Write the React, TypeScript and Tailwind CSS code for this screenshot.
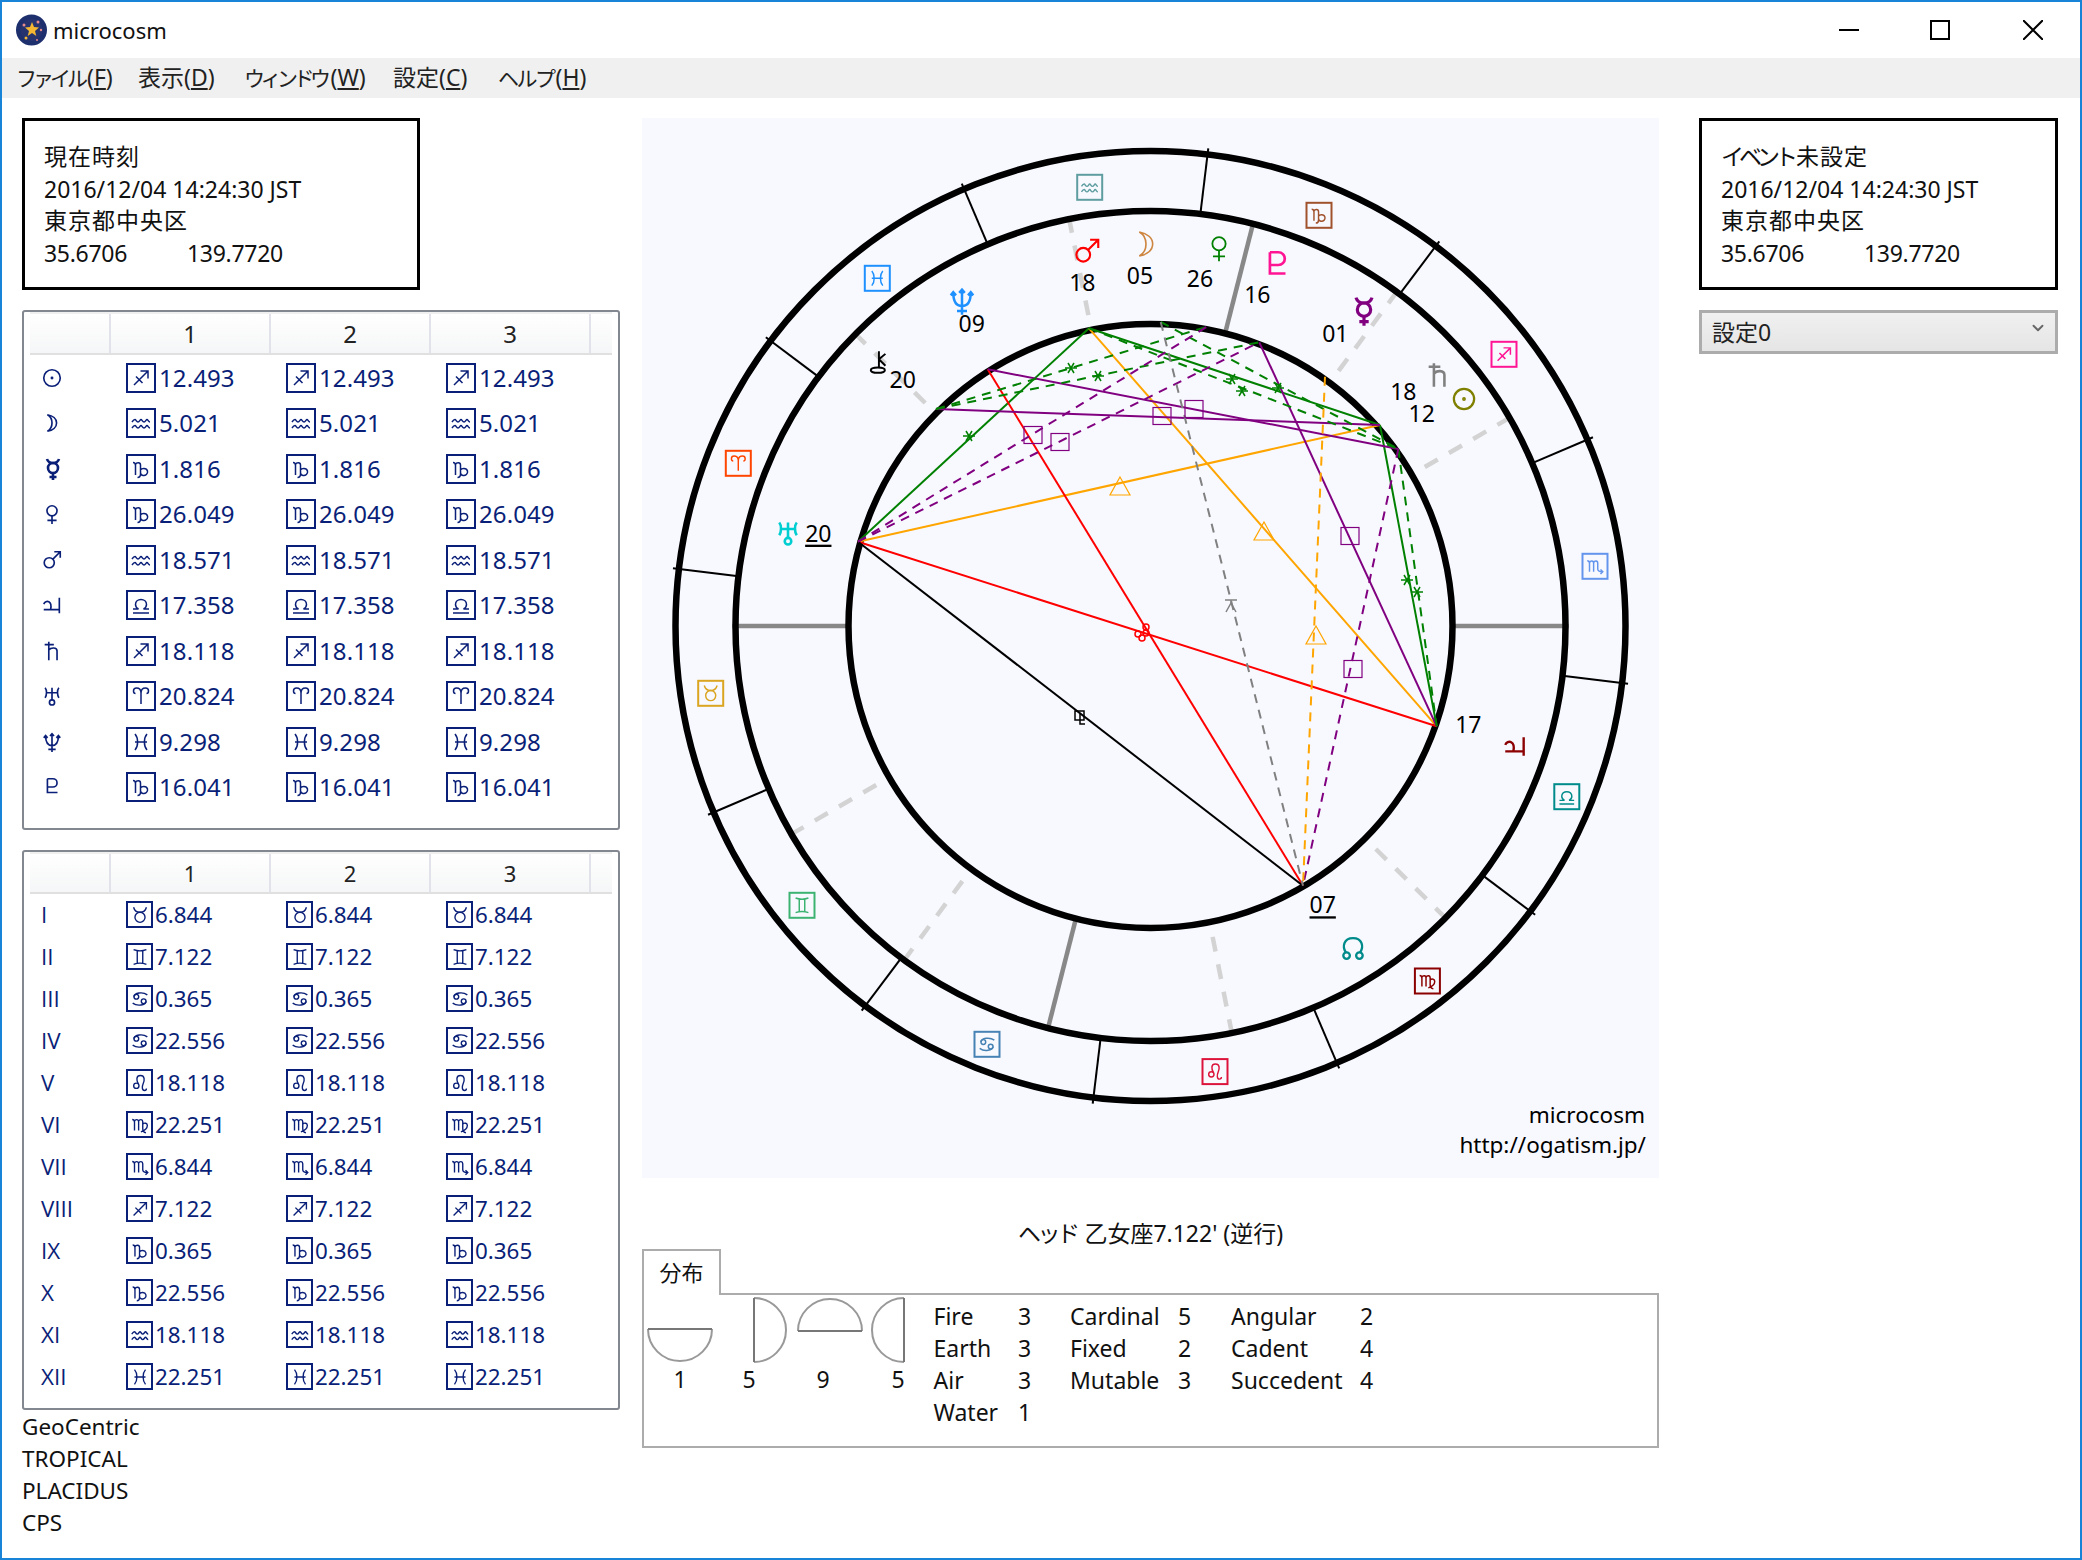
import { ChevronDown } from "lucide-react";
import type { ReactNode } from "react";

const CX = 1150.5;
const CY = 626;

// clockwise from 12 o'clock
const polar = (r: number, deg: number): [number, number] => [
  CX + r * Math.sin((deg * Math.PI) / 180),
  CY - r * Math.cos((deg * Math.PI) / 180),
];

type P = [number, number];
type Asp = [P, P, string, boolean];

const A: P = [858, 541.7];
const J: P = [1436.7, 726.3];
const N: P = [1303, 885.7];
const M: P = [1089, 328.3];
const Ne: P = [987.7, 369.3];
const Ch: P = [936, 409];
const S: P = [1380, 425];
const Sa: P = [1398.3, 449];
const Pl: P = [1259.3, 342.3];
const Mo: P = [1160.7, 322];
const Ve: P = [1207, 326.7];
const Me: P = [1325, 376.7];

const aspects: Asp[] = [
  [A, M, "#008000", false],
  [M, S, "#008000", false],
  [S, J, "#008000", false],
  [A, S, "#ffa500", false],
  [M, J, "#ffa500", false],
  [A, J, "#ff0000", false],
  [Ne, N, "#ff0000", false],
  [Ne, Sa, "#800080", false],
  [Ch, S, "#800080", false],
  [Pl, J, "#800080", false],
  [A, N, "#000000", false],
  [Ch, Pl, "#008000", true],
  [Ch, Ve, "#008000", true],
  [M, Sa, "#008000", true],
  [Mo, Sa, "#008000", true],
  [Sa, J, "#008000", true],
  [A, Ve, "#800080", true],
  [A, Pl, "#800080", true],
  [Sa, N, "#800080", true],
  [Me, N, "#ffa500", true],
  [Mo, N, "#808080", true],
];

const waves = (y: number) =>
  `M3 ${y}c1-1.500 2-2.500 3-2.500s1.500 2.500 3 2.500 2-2.500 3-2.500 1.500 2.500 3 2.500 2-2.500 3-2.500 1.500 2.500 3 2.500`;

// astrological symbols, 24x24 stroked
const GLYPHS: Record<string, ReactNode> = {
  ari: <path d="M12 20V9C12 5 9.500 4 7.500 4 5.500 4 4.500 5.500 4.500 7c0 1.500 1 2.500 2 2.500M12 9c0-4 2.500-5 4.500-5 2 0 3 1.500 3 3 0 1.500-1 2.500-2 2.500" />,
  tau: (
    <>
      <circle cx="12" cy="14.500" r="5.500" />
      <path d="M5 3.500c1 4 4 5.500 7 5.500s6-1.500 7-5.500" />
    </>
  ),
  gem: <path d="M5 4c4 1.500 10 1.500 14 0M5 20c4-1.500 10-1.500 14 0M9 5.200v13.600M15 5.200v13.600" />,
  can: (
    <>
      <circle cx="8" cy="9.500" r="2.600" />
      <circle cx="16" cy="14.500" r="2.600" />
      <path d="M5.400 9.500C6 5.500 14.500 3.500 20 7.500M18.600 14.500C18 18.500 9.500 20.500 4 16.500" />
    </>
  ),
  leo: (
    <>
      <circle cx="8" cy="15" r="2.900" />
      <path d="M10.200 13C8 9 7.500 3.800 12.500 3.800S17 9 15.500 12.500C14 16 14 20.200 17 20.200c1.500 0 2-1.200 2-2.200" />
    </>
  ),
  vir: <path d="M3.500 6c2 0 2.500 1.500 2.500 3v9M6 8c1-2.500 4.500-2.500 4.500.5V18M10.500 8c1-2.500 4.500-2.500 4.500.5V16c0 2 1 4 3.500 4.500M15 11c2-2 5-1 5 1.500 0 3-3 5.500-7 7" />,
  lib: <path d="M4 20h16M4 16h5.500c-2-1-3-2.500-3-4.500 0-3 2.500-5 5.500-5s5.500 2 5.500 5c0 2-1 3.500-3 4.500H20" />,
  sco: <path d="M3.500 6c2 0 2.500 1.500 2.500 3v9M6 8c1-2.500 4.500-2.500 4.500.5V18M10.500 8c1-2.500 4.500-2.500 4.500.5V15c0 2 1 3 5 3M18 15.500l2.500 2.500-2.500 2.500" />,
  sag: <path d="M5 19L19 5M11.500 5H19v7.500M7 10.500l6.500 6.500" />,
  cap: <path d="M4 5.500c2 0 2.500 1.500 2.500 3v9.500M6.500 7.500c1-2.500 5-2.500 5 .5v9c0 2-.8 3.500-3 3.500M11.500 13c1-2 6-2.500 7 1 .6 3-2 5-4.500 4.500-1.500-.3-2.500-1.500-2.500-3" />,
  aqu: <path d={`${waves(11)}${waves(17)}`} />,
  pis: <path d="M6 4c3.500 4 3.500 12 0 16M18 4c-3.500 4-3.500 12 0 16M6 12h12" />,
  sun: (
    <>
      <circle cx="12" cy="12" r="9" />
      <circle cx="12" cy="12" r=".7" />
    </>
  ),
  moo: <path d="M7 3c6 1 10 4.500 10 9s-4 8-10 9c3.500-2 5-5 5-9S10.500 5 7 3z" />,
  mer: (
    <>
      <circle cx="12" cy="11" r="5" />
      <path d="M6 2c1 3.500 3.500 4 6 4s5-.5 6-4M12 16v7M8.500 20h7" />
    </>
  ),
  ven: (
    <>
      <circle cx="12" cy="8.500" r="5.500" />
      <path d="M12 14v9M7 19h10" />
    </>
  ),
  mar: (
    <>
      <circle cx="9" cy="15" r="5.500" />
      <path d="M13 11L21 3M14.500 3H21v6.500" />
    </>
  ),
  jup: <path d="M3 17h17M20 4v17M3 11c1-2.500 3.500-3.500 5.500-2.500 2 1 3 3.500 2 8.500" />,
  sat: <path d="M4 5h10M8.500 2v20M8.500 11c2-3 9-3.500 9 1v10" />,
  ura: (
    <>
      <circle cx="12" cy="19" r="2.800" />
      <path d="M4.500 3c2 2.500 2 8 0 11M19.500 3c-2 2.500-2 8 0 11M5.500 8.500h13M12 3v13.200" />
    </>
  ),
  nep: <path d="M5 5c0 8 3 11 7 11s7-3 7-11M12 3v20M8 20h8M3 7.500L5 5l2.200 2.500M16.800 7.500L19 5l2 2.500M9.800 5.500L12 3l2.200 2.500" />,
  plu: <path d="M7 3v15h11M7 3h6a4.500 4.500 0 0 1 0 9H7" />,
  chi: (
    <>
      <ellipse cx="10" cy="19.500" rx="6.500" ry="2.500" />
      <path d="M11 2v15M11 9.500l6-5M11 9.500l6 6" />
    </>
  ),
  nod: (
    <>
      <circle cx="6.500" cy="18.500" r="2.800" />
      <circle cx="17.500" cy="18.500" r="2.800" />
      <path d="M6 15.800C2.500 11 4 3.500 12 3.500S21.500 11 18 15.800" />
    </>
  ),
};

const Glyph = ({
  name,
  size,
  sw = 1.8,
  color = "currentColor",
  x,
  y,
}: {
  name: string;
  size: number;
  sw?: number;
  color?: string;
  x?: number;
  y?: number;
}) => (
  <svg x={x} y={y} width={size} height={size} viewBox="0 0 24 24" fill="none" stroke={color} strokeWidth={sw}>
    {GLYPHS[name]}
  </svg>
);

const signs: [string, number, number, string][] = [
  ["aqu", 1089.7, 187.3, "#5f9ea0"],
  ["pis", 877.3, 278.3, "#1e90ff"],
  ["ari", 738.3, 463.3, "#ff4500"],
  ["tau", 710.7, 693.3, "#daa520"],
  ["gem", 802, 905.3, "#3cb371"],
  ["can", 987, 1044.3, "#4682b4"],
  ["leo", 1215, 1071.6, "#dc143c"],
  ["vir", 1427.4, 981, "#8b0000"],
  ["lib", 1566.8, 796.7, "#008b8b"],
  ["sco", 1595, 566.3, "#6495ed"],
  ["sag", 1504, 354.3, "#ff1493"],
  ["cap", 1319, 215.3, "#a0522d"],
];

const planets: [string, number, number, string, number, number][] = [
  ["sun", 1464, 399, "#808000", 27, 2],
  ["sat", 1438, 375, "#808080", 28, 2.200],
  ["mer", 1364, 311, "#800080", 32, 2.400],
  ["plu", 1277, 265, "#ff1493", 34, 1.900],
  ["ven", 1219, 248, "#008000", 29, 1.500],
  ["moo", 1146, 244, "#cd853f", 32, 1.200],
  ["mar", 1087, 251, "#ff0000", 30, 1.700],
  ["nep", 962, 301, "#1e90ff", 30, 2],
  ["chi", 880, 362, "#000000", 26, 1.800],
  ["ura", 788, 533, "#00ced1", 28, 2.200],
  ["jup", 1515, 746, "#8b0000", 26, 2.200],
  ["nod", 1353, 948, "#008b8b", 28, 2],
];

const degrees: [string, number, number, boolean][] = [
  ["12", 1421.7, 413.3, false],
  ["18", 1403.3, 390.7, false],
  ["01", 1335.3, 332.7, false],
  ["16", 1257.3, 294, false],
  ["26", 1200, 278.3, false],
  ["05", 1140, 275, false],
  ["18", 1082.3, 281.7, false],
  ["09", 971.7, 323.3, false],
  ["20", 902.7, 379.3, false],
  ["20", 818.3, 532.7, true],
  ["17", 1468.3, 723.7, false],
  ["07", 1322.7, 904.3, true],
];

const sextiles: P[] = [
  [969, 436],
  [1071, 368],
  [1098, 376],
  [1232, 379],
  [1242, 391],
  [1278, 388],
  [1407, 580],
  [1417, 592],
];
const squares: P[] = [
  [1033, 435],
  [1060, 442],
  [1162, 416],
  [1194, 409],
  [1350, 536],
  [1353, 669],
];
const trines: P[] = [
  [1120, 486],
  [1264, 531],
  [1316, 635],
];

const Chart = () => (
  <svg viewBox="642 118 1017 1060" width="1017" height="1060" className="block font-['Noto_Sans']">
    {Array.from({ length: 12 }, (_, k) => {
      const [x1, y1] = polar(415, -23.1 + 30 * k);
      const [x2, y2] = polar(481, -23.1 + 30 * k);
      return <line key={k} x1={x1} y1={y1} x2={x2} y2={y2} stroke="#000" strokeWidth="2" />;
    })}
    {[-45.3, -11.3, 36.4, 59.9, 134.7, 168.7, 216.4, 239.9].map((d) => {
      const [x1, y1] = polar(416, d);
      const [x2, y2] = polar(302, d);
      return (
        <line key={d} x1={x1} y1={y1} x2={x2} y2={y2} stroke="#d3d3d3" strokeWidth="4.5" strokeDasharray="15 13" />
      );
    })}
    {[14.3, 90, 194.3, 270].map((d) => {
      const [x1, y1] = polar(418, d);
      const [x2, y2] = polar(302, d);
      return <line key={d} x1={x1} y1={y1} x2={x2} y2={y2} stroke="#888" strokeWidth="4.5" />;
    })}
    {[475, 415, 302].map((r) => (
      <circle key={r} cx={CX} cy={CY} r={r} fill="none" stroke="#000" strokeWidth="6.5" />
    ))}

    {aspects.map(([a, b, c, dashed], i) => (
      <line
        key={i}
        x1={a[0]}
        y1={a[1]}
        x2={b[0]}
        y2={b[1]}
        stroke={c}
        strokeWidth="2"
        strokeDasharray={dashed ? "9 7" : undefined}
      />
    ))}

    {sextiles.map(([x, y], i) => (
      <g key={i} stroke="#008000" strokeWidth="1.5">
        <line x1={x - 6} y1={y} x2={x + 6} y2={y} />
        <line x1={x - 3} y1={y - 5} x2={x + 3} y2={y + 5} />
        <line x1={x + 3} y1={y - 5} x2={x - 3} y2={y + 5} />
      </g>
    ))}
    {squares.map(([x, y], i) => (
      <rect key={i} x={x - 9} y={y - 8.5} width="18" height="17" fill="none" stroke="#800080" strokeWidth="1.2" />
    ))}
    {trines.map(([x, y], i) => (
      <polygon
        key={i}
        points={`${x},${y - 9} ${x + 10},${y + 9} ${x - 10},${y + 9}`}
        fill="none"
        stroke="#ffa500"
        strokeWidth="1.2"
      />
    ))}
    <g fill="none" stroke="#ff0000" strokeWidth="1.5">
      <circle cx="1146" cy="627" r="3" />
      <circle cx="1142" cy="638" r="3" />
      <circle cx="1138" cy="634" r="3" />
      <circle cx="1146" cy="633" r="3" />
    </g>
    <g fill="none" stroke="#000" strokeWidth="1.5">
      <rect x="1075" y="711" width="9" height="9" />
      <path d="M1080 714v10h5" />
    </g>
    <path d="M1226 612l5-9 5 9M1231 603v-3M1225 600h12" fill="none" stroke="#808080" strokeWidth="1.5" />

    {signs.map(([g, x, y, c]) => (
      <g key={g}>
        <rect x={x - 12.5} y={y - 12.5} width="25" height="25" fill="none" stroke={c} strokeWidth="2" />
        <Glyph name={g} size={22} color={c} sw={1.600} x={x - 11} y={y - 11} />
      </g>
    ))}
    {planets.map(([g, x, y, c, s, w]) => (
      <Glyph key={g} name={g} size={s} color={c} sw={w} x={x - s / 2} y={y - s / 2} />
    ))}
    <g fontSize="23" fill="#000">
      {degrees.map(([t, x, y, u], i) => (
        <text
          key={i}
          x={x}
          y={y}
          textAnchor="middle"
          dominantBaseline="central"
          textDecoration={u ? "underline" : undefined}
        >
          {t}
        </text>
      ))}
      <text x="1645" y="1123" textAnchor="end" fontSize="22.5">
        microcosm
      </text>
      <text x="1646" y="1153" textAnchor="end" fontSize="22.5">
        http://ogatism.jp/
      </text>
    </g>
  </svg>
);

const planetRows: [string, string, string][] = [
  ["sun", "sag", "12.493"],
  ["moo", "aqu", "5.021"],
  ["mer", "cap", "1.816"],
  ["ven", "cap", "26.049"],
  ["mar", "aqu", "18.571"],
  ["jup", "lib", "17.358"],
  ["sat", "sag", "18.118"],
  ["ura", "ari", "20.824"],
  ["nep", "pis", "9.298"],
  ["plu", "cap", "16.041"],
];

const houseRows: [string, string, string][] = [
  ["I", "tau", "6.844"],
  ["II", "gem", "7.122"],
  ["III", "can", "0.365"],
  ["IV", "can", "22.556"],
  ["V", "leo", "18.118"],
  ["VI", "vir", "22.251"],
  ["VII", "sco", "6.844"],
  ["VIII", "sag", "7.122"],
  ["IX", "cap", "0.365"],
  ["X", "cap", "22.556"],
  ["XI", "aqu", "18.118"],
  ["XII", "pis", "22.251"],
];

const TableHead = ({ tall }: { tall: boolean }) => (
  <div
    className={`flex border-b-2 border-t-2 border-b-[#e0e0e0] border-t-[#f0f0f0] bg-gradient-to-b from-white to-[#f5f6f7] text-[#222] ${
      tall ? "h-[43px] text-[24px] leading-[39px]" : "h-[42px] text-[22px] leading-[38px]"
    }`}
  >
    <div className="w-[81px] border-r-2 border-[#e2e3ea]" />
    {["1", "2", "3"].map((h) => (
      <div key={h} className="w-[160px] border-r-2 border-[#e2e3ea] text-center">
        {h}
      </div>
    ))}
  </div>
);

const PlanetTable = () => (
  <div className="mt-[20px] h-[520px] rounded-[3px] border-2 border-[#828790] px-[6px]">
    <TableHead tall />
    {planetRows.map(([g, s, v]) => (
      <div key={g} className="flex h-[45.5px] items-center text-[24px] text-[#0a1f78]">
        <div className="w-[81px] pl-[11px]">
          <Glyph name={g} size={g === "mer" ? 24 : 22} sw={g === "mer" ? 2.600 : 1.800} />
        </div>
        {[0, 1, 2].map((i) => (
          <div key={i} className="flex w-[160px] items-center pl-[15px]">
            <span className="flex h-[30px] w-[30px] items-center justify-center border-2 border-[#0a1f78]">
              <Glyph name={s} size={24} sw={1.500} />
            </span>
            <span className="ml-[3px] tracking-[0.1px]">{v}</span>
          </div>
        ))}
      </div>
    ))}
  </div>
);

const HouseTable = () => (
  <div className="mt-[20px] h-[560px] rounded-[3px] border-2 border-[#828790] px-[6px]">
    <TableHead tall={false} />
    {houseRows.map(([h, s, v]) => (
      <div key={h} className="flex h-[42px] items-center text-[22.4px] text-[#0a1f78]">
        <div className="w-[81px] pl-[11px] font-['Open_Sans']">{h}</div>
        {[0, 1, 2].map((i) => (
          <div key={i} className="flex w-[160px] items-center pl-[15px]">
            <span className="flex h-[27px] w-[27px] items-center justify-center border-2 border-[#0a1f78]">
              <Glyph name={s} size={22} sw={1.500} />
            </span>
            <span className="ml-[2px]">{v}</span>
          </div>
        ))}
      </div>
    ))}
  </div>
);

const InfoBox = ({ title, className }: { title: ReactNode; className: string }) => (
  <div className={`h-[172px] border-[3px] border-black pt-[20px] text-[23px] leading-[32px] text-[#111] ${className}`}>
    <div className="-translate-y-[1px] tracking-[1px]">{title}</div>
    <div>2016/12/04 14:24:30 JST</div>
    <div className="-translate-y-[1px] tracking-[1px]">東京都中央区</div>
    <div className="flex tracking-[-0.3px]">
      <span className="w-[143px]">35.6706</span>
      <span>139.7720</span>
    </div>
  </div>
);

const Logo = () => (
  <svg width="31" height="32" viewBox="0 0 31 32">
    <circle cx="15.5" cy="16" r="15.5" fill="#1e2f6e" />
    <circle cx="15.5" cy="16" r="11" fill="#27336f" />
    <path d="M16 8l2 5 5 .5-4 3.500 1.300 5-4.300-3-4.300 3 1.300-5-4-3.500 5-.5z" fill="#f5b731" />
    <circle cx="8" cy="11" r="1.500" fill="#e88a8a" />
    <circle cx="22" cy="8" r="1.500" fill="#e88a8a" />
    <circle cx="25" cy="16" r="1.200" fill="#e88a8a" />
    <circle cx="10" cy="24" r="1.500" fill="#f5b731" />
    <circle cx="21" cy="26" r="1" fill="#e88a8a" />
  </svg>
);

const Menu = ({ kana, kanji, k, spacing }: { kana?: string; kanji?: string; k: string; spacing?: string }) => (
  <span className="-translate-y-[1px] inline-block text-[23px] text-[#222]">
    {kana && <span className={`text-[21px] ${spacing}`}>{kana}</span>}
    {kanji}(<span className="underline">{k}</span>)
  </span>
);

export default function App() {
  return (
    <div className="flex h-[1560px] w-[2082px] flex-col overflow-hidden border-2 border-[#1883d7] bg-white font-['Noto_Sans','Noto_Sans_CJK_JP',sans-serif]">
      <div className="flex h-[56px] items-center pl-[14px]">
        <Logo />
        <span className="ml-[6px] text-[22px] text-[#111]">microcosm</span>
        <div className="ml-auto mr-[1px] flex">
          <div className="flex h-[40px] w-[88px] items-center justify-center">
            <div className="h-[2px] w-[20px] bg-black" />
          </div>
          <div className="flex h-[40px] w-[94px] items-center justify-center">
            <div className="h-[20px] w-[20px] border-2 border-black" />
          </div>
          <div className="flex h-[40px] w-[92px] items-center justify-center">
            <svg width="20" height="20" viewBox="0 0 20 20" stroke="#000" strokeWidth="2">
              <path d="M0 0l20 20M20 0L0 20" />
            </svg>
          </div>
        </div>
      </div>

      <div className="flex h-[40px] items-center bg-[#f0f0f0] pl-[14px]">
        <div className="w-[122px]"><Menu kana="ファイル" k="F" spacing="tracking-[-4px] pr-[3px]" /></div>
        <div className="w-[106px]"><Menu kanji="表示" k="D" /></div>
        <div className="w-[149px]"><Menu kana="ウィンドウ" k="W" spacing="tracking-[-4.5px] pr-[4px]" /></div>
        <div className="w-[105px]"><Menu kanji="設定" k="C" /></div>
        <div><Menu kana="ヘルプ" k="H" spacing="tracking-[-2.5px] pr-[2px]" /></div>
      </div>

      <div className="flex pl-[20px] pt-[20px]">
        <div className="w-[598px]">
          <InfoBox title="現在時刻" className="w-[398px] pl-[19px]" />
          <PlanetTable />
          <HouseTable />
          <div className="mt-[1px] text-[22.5px] leading-[32px] text-[#111]">
            <div>GeoCentric</div>
            <div>TROPICAL</div>
            <div>PLACIDUS</div>
            <div>CPS</div>
          </div>
        </div>

        <div className="ml-[22px] w-[1017px]">
          <div className="bg-[#f8f9ff]">
            <Chart />
          </div>
          <div className="h-[71px] pt-[39px] text-center text-[23px] leading-[32px] text-[#111]">
            <span className="mr-[8px] tracking-[-3.5px]">ヘッド</span>乙女座7.122' (逆行)
          </div>
          <div className="relative z-10 -mb-[2px] h-[46px] w-[79px] border-2 border-b-0 border-[#acacac] bg-white text-center text-[22px] leading-[42px] text-[#111]">
            分布
          </div>
          <div className="flex h-[155px] border-2 border-[#acacac] bg-white text-[23px] leading-[32px] text-[#111]">
            <div className="w-[289.5px]">
              <svg width="289" height="68" viewBox="644 1296 289 68" className="block" fill="none" stroke="#999" strokeWidth="2">
                <path d="M648 1330a32 32 0 0 0 64 0" />
                <path d="M648 1330h64" stroke="#777" />
                <path d="M754 1299a32 32 0 0 1 0 64" />
                <path d="M754 1299v64" stroke="#777" />
                <path d="M798 1332a32 32 0 0 1 64 0" />
                <path d="M798 1332h64" stroke="#777" />
                <path d="M904 1299a32 32 0 0 0 0 64" />
                <path d="M904 1299v64" stroke="#777" />
              </svg>
              <div className="grid grid-cols-[72px_66px_82px_68px] text-center">
                <div>1</div>
                <div>5</div>
                <div>9</div>
                <div>5</div>
              </div>
            </div>
            <div className="grid h-[128px] grid-cols-[84.5px_52px_108px_53px_129px_auto] pt-[5px]">
              <div>Fire</div><div>3</div><div>Cardinal</div><div>5</div><div>Angular</div><div>2</div>
              <div>Earth</div><div>3</div><div>Fixed</div><div>2</div><div>Cadent</div><div>4</div>
              <div>Air</div><div>3</div><div>Mutable</div><div>3</div><div>Succedent</div><div>4</div>
              <div>Water</div><div>1</div>
            </div>
          </div>
        </div>

        <div className="ml-[40px] w-[359px]">
          <InfoBox
            title={
              <>
                <span className="tracking-[-5px]">イベント</span>
                <span className="ml-[3px]">未設定</span>
              </>
            }
            className="pl-[19px]"
          />
          <div className="mt-[20px] flex h-[44px] items-center justify-between border-[3px] border-[#acacac] bg-gradient-to-b from-[#f0f0f0] to-[#e5e5e5] pl-[10px] pr-[8px] text-[23px] text-[#222]">
            <span>設定0</span>
            <ChevronDown size={18} strokeWidth={2.5} color="#666" className="-mt-[8px]" />
          </div>
        </div>
      </div>
    </div>
  );
}
